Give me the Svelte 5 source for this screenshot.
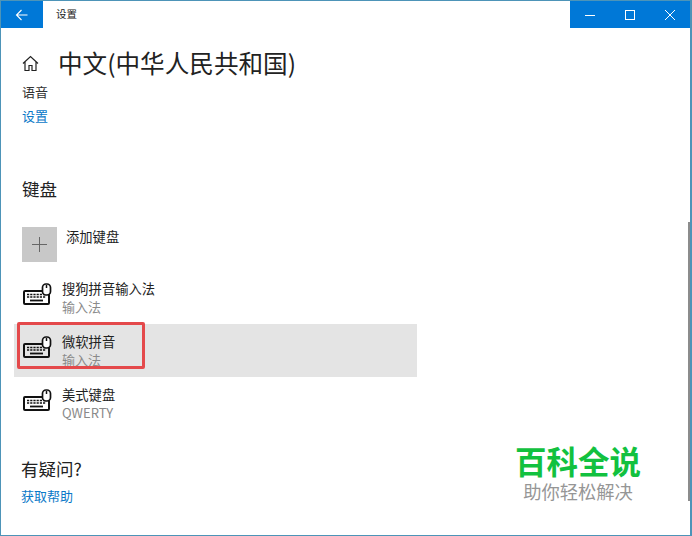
<script>
	const keyboards = [
		{ name: '搜狗拼音输入法', sub: '输入法' },
		{ name: '微软拼音', sub: '输入法', selected: true },
		{ name: '美式键盘', sub: 'QWERTY' }
	];
</script>

<div class="window">
	<div class="titlebar">
		<button class="back" aria-label="返回">
			<svg width="14" height="14" viewBox="0 0 14 14" fill="none" stroke="#fff" stroke-width="1.1">
				<path d="M1.5 7H12.5M6.5 2L1.5 7L6.5 12" />
			</svg>
		</button>
		<span class="app-title">设置</span>
		<div class="controls">
			<button aria-label="最小化">
				<svg width="12" height="12" viewBox="0 0 12 12" fill="none" stroke="#fff"><path d="M1 6.5H11" /></svg>
			</button>
			<button aria-label="最大化">
				<svg width="12" height="12" viewBox="0 0 12 12" fill="none" stroke="#fff"><rect x="1.5" y="1.5" width="9" height="9" /></svg>
			</button>
			<button aria-label="关闭">
				<svg width="12" height="12" viewBox="0 0 12 12" fill="none" stroke="#fff"><path d="M1 1L11 11M11 1L1 11" /></svg>
			</button>
		</div>
	</div>

	<div class="content">
		<div class="heading">
			<svg class="home" width="17" height="17" viewBox="0 0 17 17" fill="none" stroke="#222" stroke-width="1.2">
				<path d="M1 8.5L8.5 1.5L16 8.5M3 7V15.5H7V10.5H10V15.5H14V7" />
			</svg>
			<h1>中文(中华人民共和国)</h1>
		</div>
		<div class="speech">语音</div>
		<a class="link settings" href="#settings">设置</a>

		<h2 class="kb-title">键盘</h2>

		<div class="add-row">
			<div class="add-tile">
				<svg width="15" height="15" viewBox="0 0 15 15" fill="none" stroke="#666"><path d="M7.5 0V15M0 7.5H15" /></svg>
			</div>
			<span class="add-label">添加键盘</span>
		</div>

		<div class="list">
			{#each keyboards as kb}
				<div class="row" class:selected={kb.selected}>
					<svg class="kb-icon" width="30" height="24" viewBox="0 0 30 24" fill="none" stroke="#111">
						<rect x="2" y="8" width="25" height="13" rx="1" stroke-width="2" />
						<path d="M5 11.5H24M5 14H24" stroke-width="1.6" stroke-dasharray="2.2 1" />
						<path d="M8 17.5H21" stroke-width="1.8" />
						<rect x="20.5" y="1" width="8" height="11" rx="3.5" fill="#fff" stroke-width="1.7" />
						<path d="M24.5 2V5" stroke-width="1.5" />
					</svg>
					<div class="row-text">
						<div class="row-name">{kb.name}</div>
						<div class="row-sub">{kb.sub}</div>
					</div>
					{#if kb.selected}
						<div class="red-box"></div>
					{/if}
				</div>
			{/each}
		</div>

		<h2 class="help-title">有疑问?</h2>
		<a class="link help" href="#help">获取帮助</a>
	</div>

	<div class="scrollbar"></div>

	<div class="watermark">
		<div class="wm-main">百科全说</div>
		<div class="wm-sub">助你轻松解决</div>
	</div>
</div>

<style>
	:global(body) {
		margin: 0;
		background: #fff;
	}

	.window {
		position: relative;
		width: 692px;
		height: 536px;
		box-sizing: border-box;
		border: 1px solid #4d94b8;
		border-right-width: 2px;
		background: #fff;
		overflow: hidden;
		font-family: "Noto Sans CJK SC", "Liberation Sans", sans-serif;
		color: #1a1a1a;
	}

	.titlebar {
		display: flex;
		align-items: stretch;
		height: 27px;
	}

	button {
		border: none;
		background: #0078d7;
		padding: 0;
		display: flex;
		align-items: center;
		justify-content: center;
	}

	.back {
		width: 42px;
	}

	.app-title {
		margin-left: 13px;
		font-size: 10.5px;
		line-height: 26px;
		color: #222;
	}

	.controls {
		margin-left: auto;
		display: flex;
		width: 120px;
	}

	.controls button {
		flex: 1;
	}

	.content {
		padding-left: 21px;
	}

	.heading {
		display: flex;
		align-items: center;
		margin-top: 14px;
		height: 40px;
	}

	.home {
		margin-top: 3px;
	}

	h1 {
		margin: 0 0 0 19px;
		font-size: 24.6px;
		font-weight: 400;
		line-height: 40px;
		color: #222;
	}

	.speech {
		font-size: 13px;
		line-height: 20px;
		color: #333;
	}

	.link {
		display: block;
		font-size: 13px;
		line-height: 20px;
		color: #0a78c8;
		text-decoration: none;
	}

	.settings {
		margin-top: 4px;
	}

	h2 {
		margin: 0;
		font-size: 17.5px;
		font-weight: 400;
		line-height: 24px;
		color: #222;
	}

	.kb-title {
		margin-top: 51px;
	}

	.add-row {
		display: flex;
		align-items: flex-start;
		margin-top: 26px;
	}

	.add-tile {
		width: 35px;
		height: 35px;
		background: #c8c8c8;
		display: flex;
		align-items: center;
		justify-content: center;
	}

	.add-label {
		margin-left: 9px;
		font-size: 13.3px;
		line-height: 20px;
		color: #222;
	}

	.list {
		margin: 9px 0 0 -8px;
		width: 403px;
	}

	.row {
		position: relative;
		display: flex;
		align-items: center;
		height: 53px;
		box-sizing: border-box;
		padding-left: 8px;
	}

	.row.selected {
		background: #e4e4e4;
	}

	.kb-icon {
		flex: none;
		margin-top: -5px;
	}

	.row-text {
		margin-left: 10px;
	}

	.row-name {
		font-size: 13.3px;
		line-height: 18px;
		color: #222;
	}

	.row-sub {
		font-size: 13px;
		line-height: 18px;
		color: #8a8a8a;
	}

	.red-box {
		position: absolute;
		left: 3px;
		top: -2px;
		width: 128px;
		height: 47px;
		box-sizing: border-box;
		border: 3px solid #e4494b;
		border-radius: 2px;
	}

	.help-title {
		margin-top: 27px;
		margin-left: -1px;
	}

	.help {
		margin-top: 5px;
		margin-left: -1px;
	}

	.scrollbar {
		position: absolute;
		right: 0;
		top: 221px;
		width: 2px;
		height: 279px;
		background: #8c8c8c;
	}

	.watermark {
		position: absolute;
		left: 513px;
		top: 441px;
		width: 128px;
		text-align: center;
	}

	.wm-main {
		font-size: 31.5px;
		font-weight: 700;
		line-height: 36px;
		color: #12c13f;
		white-space: nowrap;
	}

	.wm-sub {
		font-size: 18.3px;
		line-height: 22px;
		margin-top: 2px;
		color: #969696;
		white-space: nowrap;
	}
</style>
